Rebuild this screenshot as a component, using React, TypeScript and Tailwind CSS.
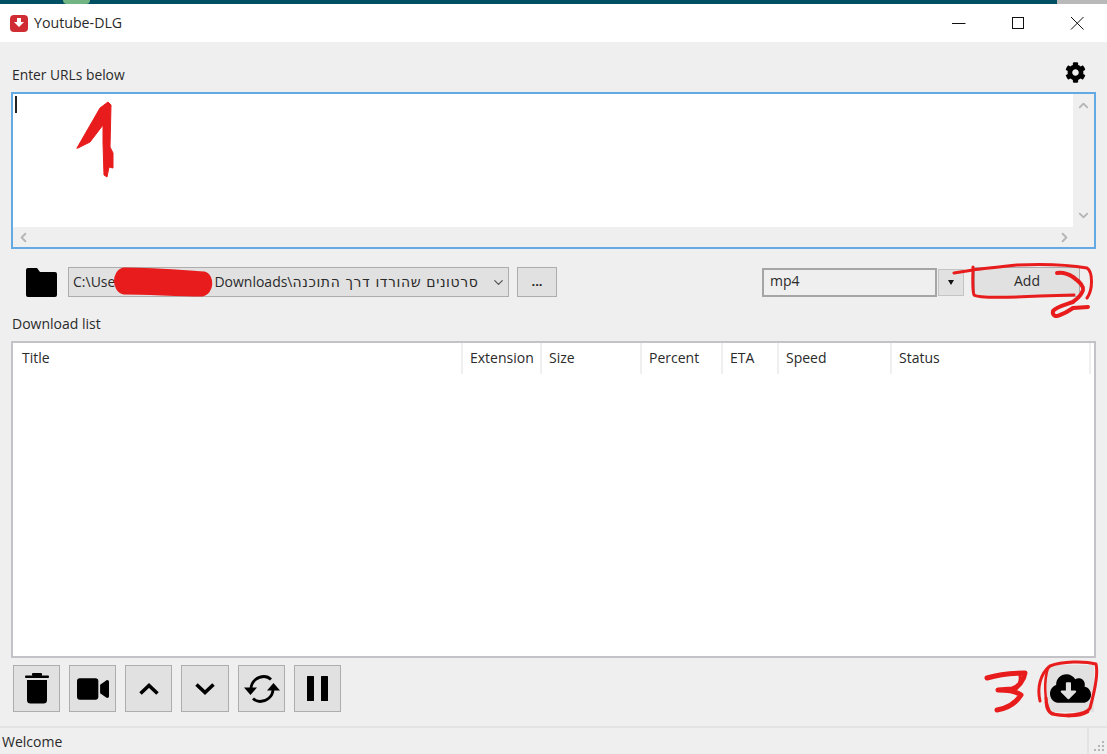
import { FaCloudDownloadAlt, FaCog, FaVideo } from "react-icons/fa";
import { LuChevronDown, LuChevronLeft, LuChevronRight, LuChevronUp } from "react-icons/lu";

const columns = [
  { label: "Title", width: "w-[450px]", pad: "pl-[9px]" },
  { label: "Extension", width: "w-[79px]", pad: "pl-[7px]" },
  { label: "Size", width: "w-[100px]", pad: "pl-[7px]" },
  { label: "Percent", width: "w-[81px]", pad: "pl-[7px]" },
  { label: "ETA", width: "w-[56px]", pad: "pl-[7px]" },
  { label: "Speed", width: "w-[113px]", pad: "pl-[7px]" },
  { label: "Status", width: "w-[199px]", pad: "pl-[7px]" },
];

const TrashIcon = (
  <svg width="24" height="31" viewBox="0 0 24 31" fill="#000">
    <rect x="0" y="2.5" width="24" height="2.5" rx="1" />
    <rect x="7" y="0" width="10" height="3" rx="1" />
    <path d="M2 7h20v20a3.5 3.5 0 0 1-3.5 3.5h-13A3.5 3.5 0 0 1 2 27z" />
  </svg>
);

const UpIcon = (
  <svg width="20" height="12" viewBox="0 0 20 12" fill="none" stroke="#000" strokeWidth="3.6">
    <path d="M1.5 10.5L10 2.5l8.5 8" />
  </svg>
);

const DownIcon = (
  <svg width="20" height="12" viewBox="0 0 20 12" fill="none" stroke="#000" strokeWidth="3.6">
    <path d="M1.5 1.5L10 9.5l8.5-8" />
  </svg>
);

const ReloadIcon = (
  <svg width="36" height="28" viewBox="0 0 36 28" fill="none" stroke="#000" strokeWidth="2.8">
    <path d="M7 14C7 6 14 1.5 20 1.5c3 0 5 1 7 3" />
    <path d="M29 14c0 8-7 12.5-13 12.5-3 0-5-1-7-3" />
    <path d="M0 12.5h13L6.500 20z" fill="#000" stroke="none" />
    <path d="M23 15.500h13L29.500 8z" fill="#000" stroke="none" />
  </svg>
);

const PauseIcon = (
  <svg width="21" height="25" viewBox="0 0 21 25" fill="#000">
    <rect x="0" y="0" width="7" height="25" rx="0.5" />
    <rect x="14" y="0" width="7" height="25" rx="0.5" />
  </svg>
);

const tools = [
  { icon: TrashIcon, key: "delete", width: "w-[47px]" },
  { icon: <FaVideo size={32} />, key: "video", width: "w-[47px]" },
  { icon: UpIcon, key: "up", width: "w-[47px]" },
  { icon: DownIcon, key: "down", width: "w-[48px]" },
  { icon: ReloadIcon, key: "reload", width: "w-[47px]" },
  { icon: PauseIcon, key: "pause", width: "w-[47px]" },
];

function Scribbles() {
  return (
    <svg className="pointer-events-none absolute left-0 top-0" width="1107" height="754" fill="none" stroke="#e81c1c" strokeLinecap="round" strokeLinejoin="round">
      {/* 1 */}
      <path
        d="M77 148 L100 108 L108 102 L111 105 L110 147 L113 153 L113 168 L109 167 L107 177 L104 175 L103 143 L103 125 L90 142 L78 148 Z"
        fill="#e81c1c"
        strokeWidth="1"
      />
      {/* redacted part of the path */}
      <path d="M124 270 C150 270 175 272 204 274 C212 276 212 292 202 294 C175 294 150 292 124 292 C114 290 114 272 124 270 Z" fill="#e81c1c" strokeWidth="5" />
      {/* 2 */}
      <path d="M954 273 L973 270 C990 268 1005 266 1017 265 C1040 264 1070 265 1087 268 C1093 272 1093 290 1087 298" strokeWidth="3" />
      <path d="M973 267 C973 278 972 290 974 295 C978 298 1000 298 1040 296 L1074 295" strokeWidth="3" />
      <path d="M1057 273 C1064 272 1070 275 1073 277 C1080 282 1084 286 1083 290 C1081 297 1075 300 1073 302 C1064 305 1056 307 1053 311 C1052 316 1056 317 1060 315 C1066 313 1070 310 1073 308 L1088 307" strokeWidth="4" />
      {/* 3 */}
      <path d="M987 678 C1000 674 1014 673 1025 673 C1024 680 1018 688 1012 689 L998 690 C1006 690 1016 691 1021 695 C1016 703 1008 708 997 710" strokeWidth="5" />
      <path d="M1020 676 C1021 682 1018 688 1014 691" strokeWidth="3" />
      {/* circle around download */}
      <path d="M1040 701 C1037 688 1040 674 1050 666 C1062 661 1085 661 1096 664 C1098 672 1095 690 1090 708 C1086 716 1062 716 1052 714 C1046 710 1046 704 1046 698" strokeWidth="3" />
      <path d="M1048 668 C1044 680 1044 700 1050 712 C1062 718 1080 717 1088 712" strokeWidth="2.5" />
    </svg>
  );
}

export default function App() {
  return (
    <div className="relative flex h-[754px] w-[1107px] flex-col overflow-hidden bg-[#efefef] font-['Open_Sans','Liberation_Sans',sans-serif] text-[14px] text-[#2a2a2a]">
      {/* desktop strip behind the window */}
      <div className="flex h-1 shrink-0 bg-[#004f63]">
        <div className="ml-[63px] h-1 w-[27px] rounded-b-md bg-[#72b583]" />
        <div className="ml-auto h-1 w-[50px] bg-[#b9b9b9]" />
      </div>

      <div className="flex h-[38px] shrink-0 items-center bg-white pl-[10px]">
        <div className="flex h-[17px] w-[18px] items-center justify-center rounded-[4px] bg-[#cf2c33]">
          <svg width="10" height="10" viewBox="0 0 10 10" fill="white">
            <path d="M3 0h4v4h3L5 9 0 4h3z" />
          </svg>
        </div>
        <span className="ml-[6px] text-[14.2px] text-[#2a2a2a]">Youtube-DLG</span>
        <div className="ml-auto flex items-center">
          <svg width="14" height="14" viewBox="0 0 14 14" className="mr-[45px]" stroke="#111" fill="none"><path d="M0 7.5h13.5" /></svg>
          <svg width="14" height="14" viewBox="0 0 14 14" className="mr-[45px]" stroke="#111" fill="none"><rect x="1.500" y="1.500" width="11" height="11" /></svg>
          <svg width="14" height="14" viewBox="0 0 14 14" className="mr-[23px]" stroke="#111" fill="none"><path d="M1 1l12.500 12.500M13.500 1L1 13.500" /></svg>
        </div>
      </div>

      <div className="flex h-[50px] shrink-0 items-end justify-between pb-[7px] pl-3 pr-[21px]">
        <span className="text-[13.8px] leading-5">Enter URLs below</span>
        <FaCog size={21} className="mb-[2px] text-black" />
      </div>

      <div className="relative mx-[11px] flex h-[157px] shrink-0 flex-col border-2 border-[#63a9e4] bg-white">
        <div className="flex min-h-0 flex-1">
          <div className="flex-1 pl-[2px] pt-[2px]">
            <div className="h-[17px] w-[2px] bg-[#222]" />
          </div>
          <div className="flex w-[21px] flex-col items-center justify-between bg-[#efefef] py-[4px] text-[#b5b5b5]">
            <LuChevronUp size={15} strokeWidth={3} />
            <LuChevronDown size={15} strokeWidth={3} />
          </div>
        </div>
        <div className="flex h-5 items-center justify-between bg-[#efefef] pl-[3px] pr-[22px] text-[#b5b5b5]">
          <LuChevronLeft size={15} strokeWidth={3} />
          <LuChevronRight size={15} strokeWidth={3} />
        </div>
      </div>

      <div className="mt-[18px] flex h-[30px] shrink-0 items-center pl-[26px]">
        <svg width="31" height="29" viewBox="0 0 31 29" fill="#000">
          <path d="M2 0h9l3 4h15a2 2 0 0 1 2 2v21a2 2 0 0 1-2 2H2a2 2 0 0 1-2-2V2a2 2 0 0 1 2-2z" />
        </svg>
        <div className="ml-[11px] flex h-[30px] w-[441px] items-center border border-[#adadad] bg-[#e1e1e1] pl-[4px] pr-[2px] text-[14px]">
          <span className="flex-1 whitespace-nowrap">
            C:\Use<span className="inline-block w-[99px]" />Downloads\<span className="font-['DejaVu_Sans','Liberation_Sans',sans-serif] text-[14px] tracking-[0.6px]">סרטונים שהורדו דרך התוכנה</span>
          </span>
          <LuChevronDown size={15} className="text-[#555]" />
        </div>
        <button className="ml-2 flex h-[30px] w-10 items-center justify-center border border-[#adadad] bg-[#e1e1e1] text-[13px] font-bold">...</button>
        <div className="ml-[205px] flex h-[29px] w-[175px] items-center border-2 border-[#a5a5a5] bg-[#efefef] pb-[3px] pl-[6px] text-[14px]">mp4</div>
        <div className="ml-[1px] flex h-[27px] w-[26px] items-center justify-center border border-[#c4c4c4] bg-[#e1e1e1]">
          <svg width="6" height="5" viewBox="0 0 6 5"><path d="M0 0h6L3 5z" fill="#111" /></svg>
        </div>
        <button className="ml-[10px] h-[30px] w-[106px] border border-[#adadad] bg-[#e1e1e1] pb-[3px] text-[14px]">Add</button>
      </div>

      <div className="mt-[17px] h-5 shrink-0 pl-3 text-[14px] leading-5">Download list</div>

      <div className="mx-[11px] mt-[7px] flex h-[317px] shrink-0 flex-col border-2 border-[#c2c2c7] bg-white">
        <div className="flex h-[31px] shrink-0">
          {columns.map((col) => (
            <div key={col.label} className={`${col.width} ${col.pad} flex shrink-0 items-center border-r-2 border-[#efefef] pb-[2px] text-[14px]`}>
              {col.label}
            </div>
          ))}
        </div>
      </div>

      <div className="mt-[7px] flex shrink-0 justify-between px-[13px]">
        <div className="flex gap-[9px]">
          {tools.map((tool) => (
            <button key={tool.key} className={`${tool.width} flex h-[47px] items-center justify-center border border-[#adadad] bg-[#e1e1e1] text-black`}>
              {tool.icon}
            </button>
          ))}
        </div>
        <button className="flex size-[47px] items-center justify-center bg-[#e1e1e1] text-black">
          <FaCloudDownloadAlt size={41} />
        </button>
      </div>

      <div className="mt-[14px] flex min-h-0 flex-1 border-t-2 border-[#e3e3e3]">
        <span className="flex-1 pl-[2px] pt-[4px] text-[14px] leading-5">Welcome</span>
        <div className="relative w-[20px] border-l-2 border-[#e3e3e3]">
          <svg className="absolute bottom-[2px] right-[2px]" width="11" height="11" viewBox="0 0 11 11" fill="#b5b5b5">
            <rect x="8" y="0" width="2" height="2" />
            <rect x="4" y="4" width="2" height="2" />
            <rect x="8" y="4" width="2" height="2" />
            <rect x="0" y="8" width="2" height="2" />
            <rect x="4" y="8" width="2" height="2" />
            <rect x="8" y="8" width="2" height="2" />
          </svg>
        </div>
      </div>

      <Scribbles />
    </div>
  );
}
